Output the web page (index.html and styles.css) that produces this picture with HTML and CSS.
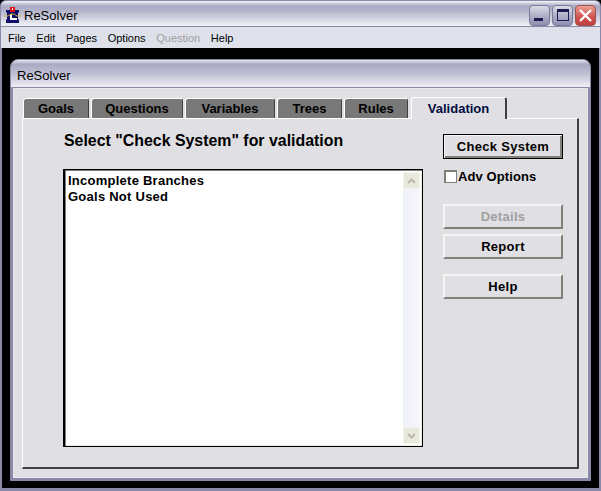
FILE: index.html
```html
<!DOCTYPE html>
<html lang="en">
<head>
<meta charset="utf-8">
<title>ReSolver</title>
<link rel="stylesheet" href="styles.css">
</head>
<body>
<div class="window">
  <header class="titlebar">
    <svg class="app-icon" width="17" height="17" viewBox="0 0 17 17">
      <path d="M2 3h13v2l-1 1v6l1 1v3H2v-3l1-1V6L2 5z" fill="#10106a"/>
      <rect x="6" y="7" width="2" height="6" fill="#fff"/>
      <rect x="6" y="11" width="7" height="2" fill="#fff"/>
      <rect x="6" y="0" width="5" height="5" fill="#e01010"/>
      <rect x="8" y="1" width="1" height="2" fill="#fff"/>
      <path d="M0 9h4l3-2 3 0 3 2h4" fill="none" stroke="#c8b040" stroke-width="1"/>
    </svg>
    <span class="title-text">ReSolver</span>
    <div class="controls">
      <button class="ctl"><span class="glyph-min"></span></button>
      <button class="ctl"><span class="glyph-max"></span></button>
      <button class="ctl ctl-close">
        <svg width="15" height="15" viewBox="0 0 15 15"><path d="M2 2l11 11M13 2L2 13" stroke="#fff" stroke-width="2.4" fill="none"/></svg>
      </button>
    </div>
  </header>
  <nav class="menubar">
    <span class="menu-item">File</span>
    <span class="menu-item">Edit</span>
    <span class="menu-item">Pages</span>
    <span class="menu-item">Options</span>
    <span class="menu-item menu-disabled">Question</span>
    <span class="menu-item">Help</span>
  </nav>
  <main class="desktop">
    <section class="child">
      <div class="child-title">ReSolver</div>
      <div class="child-body">
        <div class="tabs">
          <div class="tab tab-goals">Goals</div>
          <div class="tab tab-questions">Questions</div>
          <div class="tab tab-variables">Variables</div>
          <div class="tab tab-trees">Trees</div>
          <div class="tab tab-rules">Rules</div>
          <div class="tab tab-active">Validation</div>
        </div>
        <div class="panel">
          <div class="main-col">
            <h1 class="heading">Select "Check System" for validation</h1>
            <div class="listbox">
              <ul class="list">
                <li>Incomplete Branches</li>
                <li>Goals Not Used</li>
              </ul>
              <div class="scrollbar">
                <div class="sb-btn"><svg width="9" height="6" viewBox="0 0 9 6"><path d="M1 5l3.5-3.5L8 5" fill="none" stroke="#b8b8b0" stroke-width="2"/></svg></div>
                <div class="sb-btn"><svg width="9" height="6" viewBox="0 0 9 6"><path d="M1 1l3.5 3.5L8 1" fill="none" stroke="#b8b8b0" stroke-width="2"/></svg></div>
              </div>
            </div>
          </div>
          <div class="side-col">
            <button class="btn btn-default">Check System</button>
            <label class="check"><span class="checkbox"></span>Adv Options</label>
            <button class="btn btn-disabled">Details</button>
            <button class="btn btn-report">Report</button>
            <button class="btn btn-help">Help</button>
          </div>
        </div>
      </div>
    </section>
  </main>
</div>
</body>
</html>
```
FILE: styles.css
```css
* { box-sizing: border-box; }
html, body { margin: 0; padding: 0; }
body { width: 601px; height: 491px; overflow: hidden; background: #000; }
.window {
  width: 601px; height: 491px;
  display: flex; flex-direction: column;
  border-left: 2px solid #8a8aa8;
  border-right: 2px solid #8a8aa8;
  border-bottom: 3px solid #8a8aa8;
  border-top: 1px solid #8a8aa8;
  border-radius: 6px 6px 0 0;
  background: #000;
  font-family: "Liberation Sans", Arial, sans-serif;
}
.titlebar {
  height: 26px; flex: none;
  display: flex; align-items: center;
  padding: 3px 0 0 3px;
  margin: 0 -1px;
  background: linear-gradient(to bottom, #f4f4f8 0, #a9a9c3 5px, #b4b4cb 10px, #e6e6ee 22px, #f0f0f5 25px);
  border-radius: 5px 5px 0 0;
  border-bottom: 1px solid #8a8aa8;
}
.app-icon { margin-right: 3px; flex: none; }
.title-text { font: 13px "Liberation Sans", sans-serif; color: #000; }
.controls { margin-left: auto; margin-right: 4px; display: flex; gap: 2px; }
.ctl {
  width: 21px; height: 21px; padding: 0; position: relative;
  border: 1px solid #7a7a9a; border-radius: 4px;
  background: linear-gradient(to bottom, #dcdce8, #b0b0c8 50%, #9090b0);
  display: flex; align-items: center; justify-content: center;
}
.ctl-close { border-color: #a05050; background: linear-gradient(to bottom, #e8a090, #d05050 60%, #c04040); }
.glyph-min { width: 9px; height: 3px; background: #1c1c50; margin-top: 8px; margin-right: 2px; }
.glyph-max { width: 12px; height: 12px; border: 1px solid #1c1c50; border-top-width: 3px; }
.menubar {
  height: 21px; flex: none;
  display: flex; align-items: center;
  background: #dfe1ea;
  padding-left: 7px; padding-top: 1px; gap: 10.6px;
  font: 11px "Liberation Sans", sans-serif; color: #000;
  margin: 0 -1px;
}
.menu-disabled { color: #a0a0a0; }
.desktop {
  flex: 1; min-height: 0;
  background: #000;
  padding: 11px 8px 7px 8px;
  display: flex;
}
.child {
  flex: 1; display: flex; flex-direction: column;
  background: #8a8aa8;
  border: 1px solid #8a8aa8;
  border-radius: 8px 8px 0 0;
  padding: 0;
}
.child-title {
  height: 27px; flex: none;
  display: flex; align-items: center;
  padding: 3px 0 0 6px;
  font: 13px "Liberation Sans", sans-serif; color: #000;
  background: linear-gradient(to bottom, #e8e8f0 0, #a9a9c3 4px, #c0c0d4 14px, #eeeef3 27px);
  border-radius: 7px 7px 0 0;
}
.child-body {
  flex: 1; min-height: 0;
  margin: 0 1px 1px 1px;
  border: 1px solid #8a8aa8;
  outline: 1px solid #e8e8ee;
  outline-offset: -2px;
  background: #e0dfe3;
  padding: 9px 9px 9px 9px;
  display: flex; flex-direction: column;
}
.tabs { display: flex; height: 21px; flex: none; gap: 2px; padding-left: 1px; position: relative; z-index: 1; }
.tab {
  height: 20px; margin-top: 1px;
  background: #787878;
  border: 1px solid #fff;
  border-bottom: none;
  border-right: 1px solid #404040;
  border-radius: 3px 3px 0 0;
  display: flex; align-items: center; justify-content: center;
  font: bold 13px "Liberation Sans", sans-serif; color: #000;
}
.tab-goals { width: 66px; }
.tab-questions { width: 92px; }
.tab-variables { width: 90px; }
.tab-trees { width: 65px; }
.tab-rules { width: 64px; }
.tab-active {
  width: 96px; height: 22px; margin-top: 0; margin-left: 1px;
  background: #e0dfe3; color: #000c40;
  border-right: 2px solid #404040;
}
.panel {
  flex: 1; min-height: 0;
  border: 2px solid #404040;
  border-left: 1px solid #fff;
  border-top: 1px solid #fff;
  background: #e0dfe3;
  display: flex;
  padding: 0 14px 20px 40px;
  justify-content: space-between;
}
.main-col { display: flex; flex-direction: column; width: 360px; }
.heading {
  margin: 13px 0 0 1px; height: 37px;
  font: bold 15.9px "Liberation Sans", sans-serif; color: #000;
}
.listbox {
  flex: 1; min-height: 0;
  border: 1px solid #000;
  border-left: 2px solid #000;
  background: #fff;
  box-shadow: inset 1px 1px 0 #808080, inset -1px -1px 0 #ecece0;
  display: flex; padding: 2px 2px 2px 1px;
}
.list {
  flex: 1; margin: 0; padding: 1px 0 0 2px; list-style: none;
  font: bold 13px/16px "Liberation Sans", sans-serif;
  letter-spacing: 0.25px; color: #000;
}
.scrollbar {
  width: 17px;
  background: linear-gradient(to right, #eef0f8, #f8f8fc);
  display: flex; flex-direction: column; justify-content: space-between;
}
.sb-btn {
  height: 17px; background: #e8e8dc;
  border: 1px solid #f4f4ec;
  display: flex; align-items: center; justify-content: center;
}
.side-col { width: 120px; display: flex; flex-direction: column; padding-top: 15px; }
.btn {
  width: 120px; height: 25px; padding: 0;
  background: #e0dfe3;
  border: 2px solid;
  border-color: #f4f4f0 #808078 #808078 #f4f4f0;
  font: bold 13px "Liberation Sans", sans-serif;
  letter-spacing: 0.3px; color: #000;
}
.btn-default {
  border: 1px solid #000;
  box-shadow: inset 1px 1px 0 #f4f4f0, inset -2px -2px 0 #808078;
}
.btn-disabled { color: #a0a0a0; margin-top: 18px; }
.btn-report { margin-top: 5px; }
.btn-help { margin-top: 15px; }
.check {
  display: flex; align-items: center; height: 20px; margin-top: 7px;
  font: bold 13px "Liberation Sans", sans-serif; letter-spacing: 0.1px; color: #000;
}
.checkbox {
  width: 13px; height: 13px; margin: 0 1px 0 1px;
  background: #fff;
  border: 1px solid #808078;
  border-top-width: 2px; border-left-width: 2px;
}
```
